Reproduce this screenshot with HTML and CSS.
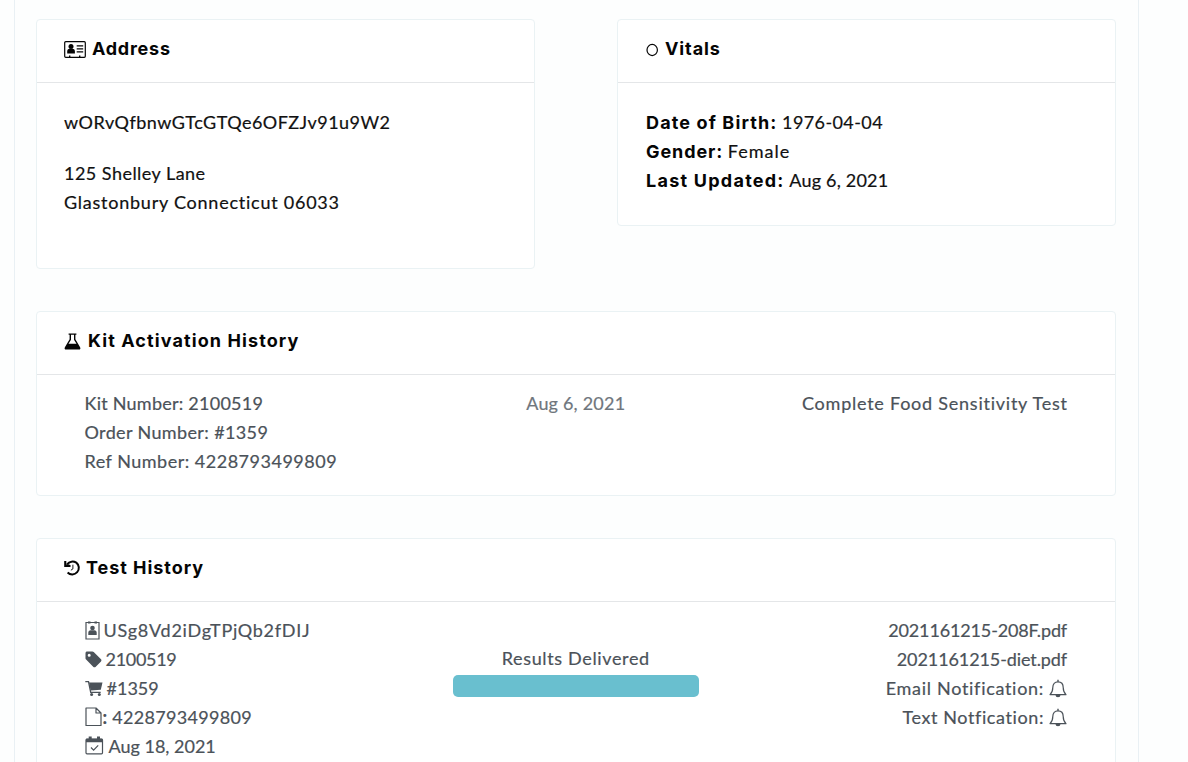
FILE: index.html
```
<!DOCTYPE html>
<html lang="en">
<head>
<meta charset="utf-8">
<title>Customer record</title>
<link rel="stylesheet" href="styles.css">
</head>
<body>
<main class="panel">
  <div class="top-row">
    <section class="card address-card">
      <h2 class="card-header t-address"><svg class="i-address" width="22" height="17" viewBox="0 0 22 17"><rect x=".7" y=".7" width="20.6" height="15.6" rx="1" fill="none" stroke="currentColor" stroke-width="1.2"/><circle cx="7" cy="5.4" r="2.5"/><path d="M3.2 12.4v-2.2c0-1.7 1.300-2.500 2.500-2.500h2.700c1.300 0 2.500.8 2.500 2.500v2.200zM5 14.500h1.400v1.500H5zM15 14.500h1.400v1.500H15z"/><path d="M12.700 4.800h6.500M12.700 7.800h6.500M12.700 10.800h6.500" fill="none" stroke="currentColor" stroke-width="1.2"/></svg><span>Address</span></h2>
      <div class="card-body">
        <p class="t-uid"><span>wORvQfbnwGTcGTQe6OFZJv91u9W2</span></p>
        <p class="address"><span class="t-street">125 Shelley Lane</span><br><span class="t-city">Glastonbury Connecticut 06033</span></p>
      </div>
    </section>
    <section class="card vitals-card">
      <h2 class="card-header t-vitals"><svg class="i-circle" width="13" height="14" viewBox="0 0 13 14"><ellipse cx="6.2" cy="7" rx="5.2" ry="5.6" fill="none" stroke="currentColor" stroke-width="1.2"/></svg><span>Vitals</span></h2>
      <div class="card-body">
        <p><b class="t-dob">Date of Birth:</b> <span class="t-dobv">1976-04-04</span></p>
        <p><b class="t-gender">Gender:</b> <span class="t-genderv">Female</span></p>
        <p><b class="t-upd">Last Updated:</b> <span class="t-date">Aug 6, 2021</span></p>
      </div>
    </section>
  </div>

  <section class="card kit-card">
    <h2 class="card-header t-kit"><svg class="i-flask" width="17" height="17" viewBox="0 0 17 17"><path d="M4.600.4h7.800v1.300h-1v4.600l4.700 7.900c.7 1.200.1 2.400-1.200 2.400H2.100c-1.300 0-1.900-1.200-1.200-2.400l4.700-7.900V1.700h-1zM7 1.700v5L4.500 10.800h8L10 6.700v-5z" fill-rule="evenodd"/></svg><span>Kit Activation History</span></h2>
    <div class="record">
      <div class="details">
        <p><span class="t-kn">Kit Number: 2100519</span></p>
        <p><span class="t-on">Order Number: #1359</span></p>
        <p><span class="t-rn">Ref Number: 4228793499809</span></p>
      </div>
      <p class="date"><span class="t-date">Aug 6, 2021</span></p>
      <p class="result"><span class="t-test">Complete Food Sensitivity Test</span></p>
    </div>
  </section>

  <section class="card test-card">
    <h2 class="card-header t-hist"><svg class="i-history" width="17" height="17" viewBox="0 0 17 17"><path d="M.2 1v6h6.300V5H2.300V1z"/><path d="M1 5.600h4.500" fill="none" stroke="currentColor" stroke-width="2.400"/><path d="M3 4.300C5.500 1.300 9.500.9 12.300 2.600a6.600 6.600 0 1 1-8.700 9.900" fill="none" stroke="currentColor" stroke-width="2"/><path d="M8.900 4.700v4.200l-2 1.300" fill="none" stroke="currentColor" stroke-width=".9"/></svg><span>Test History</span></h2>
    <div class="record">
      <div class="details">
        <p class="icon-line l-id"><svg width="15" height="19" viewBox="0 0 15 19"><path d="M1 1.500h13v16.500H1z" fill="none" stroke="currentColor" stroke-width="1.200"/><path d="M3 .5h2.500v2H3zM9.500.5H12v2H9.500z"/><circle cx="7.500" cy="7" r="2.300"/><path d="M3.300 14v-2.300c0-1.600 1-2.500 2.300-2.500h3.800c1.300 0 2.300.9 2.300 2.500V14z"/></svg><span class="t-id">USg8Vd2iDgTPjQb2fDIJ</span></p>
        <p class="icon-line l-tag"><svg width="17" height="17" viewBox="0 0 17 17"><path d="M.5 2.200C.5 1.200 1.200.500 2.200.500h5.200c.5 0 .9.200 1.300.500l7.300 7.300c.6.600.6 1.500 0 2.100l-5.500 5.500c-.6.600-1.500.6-2.100 0L1.100 8.600C.7 8.200.5 7.800.5 7.300zM4.200 2.700a1.500 1.500 0 1 0 0 3 1.500 1.500 0 0 0 0-3z" fill-rule="evenodd"/></svg><span class="t-tag">2100519</span></p>
        <p class="icon-line l-cart"><svg width="18" height="17" viewBox="0 0 18 17"><path d="M4 2.400h13.500l-1.700 7.400-10.200.700z"/><path d="M.300 1.700h3.200l2.200 10.600h10" fill="none" stroke="currentColor" stroke-width="1.300"/><circle cx="6.600" cy="14.400" r="1.500"/><circle cx="14.300" cy="14.400" r="1.500"/></svg><span class="t-cart">#1359</span></p>
        <p class="icon-line l-file"><svg width="17" height="20" viewBox="0 0 17 20"><path d="M1 1h10l5 5v12.500H1zM11 1v5h5" fill="none" stroke="currentColor" stroke-width="1.200" stroke-linejoin="round"/></svg><span class="t-file"><b>:</b> 4228793499809</span></p>
        <p class="icon-line l-cal"><svg width="19" height="19" viewBox="0 0 19 19"><rect x="1" y="3" width="16.500" height="14.800" rx="1" fill="none" stroke="currentColor" stroke-width="1.200"/><path d="M1 2.700h16.500v3.500H1zM3.700.600h3v4h-3zM12 .600h3v4h-3z"/><path d="M6 11.500l2.600 2.600 4.600-4.800" fill="none" stroke="currentColor" stroke-width="1.200"/></svg><span class="t-cal">Aug 18, 2021</span></p>
      </div>
      <div class="status">
        <p><span class="t-res">Results Delivered</span></p>
        <div class="bar"></div>
      </div>
      <div class="result">
        <p><span class="t-pdf1">2021161215-208F.pdf</span></p>
        <p><span class="t-pdf2">2021161215-diet.pdf</span></p>
        <p class="notify"><span class="t-email">Email Notification:</span><svg width="18" height="19" viewBox="0 0 18 19"><path d="M1 15.600c2.500-2.200 2.800-4 2.800-7 0-3.500 2-5.800 5.200-5.800s5.200 2.300 5.200 5.800c0 3 .3 4.800 2.800 7z" fill="none" stroke="currentColor" stroke-width="1.200" stroke-linejoin="round"/><path d="M8.300.700h1.400v2H8.300zM6.500 16h5a2.500 2.300 0 0 1-5 0z"/></svg></p>
        <p class="notify"><span class="t-text">Text Notfication:</span><svg width="18" height="19" viewBox="0 0 18 19"><path d="M1 15.600c2.500-2.200 2.800-4 2.800-7 0-3.500 2-5.800 5.200-5.800s5.200 2.300 5.200 5.800c0 3 .3 4.800 2.800 7z" fill="none" stroke="currentColor" stroke-width="1.200" stroke-linejoin="round"/><path d="M8.300.700h1.400v2H8.300zM6.500 16h5a2.500 2.300 0 0 1-5 0z"/></svg></p>
      </div>
    </div>
  </section>
</main>
</body>
</html>
```
FILE: styles.css
```
* { box-sizing: border-box; }
body {
  margin: 0;
  height: 762px;
  overflow: hidden;
  background: #fdfefe;
  color: #111;
  font: 18px/28.8px Lato, "Open Sans", sans-serif;
  font-variant-ligatures: none;
  -webkit-text-stroke: .2px currentColor;
}
p, h2 { margin: 0; font-size: 18px; }
svg { display: block; flex: none; fill: currentColor; }
.panel {
  width: 1125px;
  min-height: 762px;
  margin-left: 14px;
  padding: 19px 22px 0 21px;
  border: solid #e9f0f4;
  border-width: 0 1px;
}
.top-row {
  display: flex;
  justify-content: space-between;
  align-items: flex-start;
  height: 292px;
}
.card {
  background: #fff;
  border: 1px solid #eaf2f4;
  border-radius: 4px;
}
.top-row .card { width: 499px; }
.address-card { height: 250px; }
.vitals-card { height: 207px; }
.kit-card { height: 185px; margin-bottom: 42px; }
.test-card { height: 260px; }
.card-header {
  display: flex;
  align-items: center;
  height: 63px;
  padding: 0 27px 3px;
  border-bottom: 1px solid #e4e6e8;
  color: #050505;
  font-family: Inter, sans-serif;
  font-weight: 700;
  -webkit-text-stroke: 0;
  white-space: nowrap;
}
.card-body { padding: 25px 27px; white-space: nowrap; }
.vitals-card .card-body { padding-left: 28px; }
.vitals-card .card-header { padding-left: 28px; }
.card-body b {
  color: #050505;
  font-family: Inter, sans-serif;
  font-weight: 700;
  line-height: 1;
  -webkit-text-stroke: 0;
}
.address { margin-top: 22.200px; }
.i-address { margin-right: 6px; }
.i-circle { margin-right: 6px; }
.i-flask { margin-right: 7px; }
.i-history { margin-right: 5px; }
.record {
  display: grid;
  grid-template-columns: 1fr 25% 1fr;
  padding: 14.400px 48px 0 47.500px;
  color: #4b5259;
  white-space: nowrap;
}
.date { color: #6f767d; text-align: center; }
.result { text-align: right; }
.status { padding-top: 27.400px; text-align: center; }
.bar { height: 22px; margin-top: 2px; border-radius: 5px; background: #69bfcf; }
.icon-line { display: flex; align-items: center; height: 28.8px; }
.l-id svg { margin-right: 4px; }
.l-tag svg { margin-right: 4px; }
.l-cart svg { margin-right: 4px; }
.l-file svg { margin-right: 1px; }
.l-cal svg { margin-right: 5px; }
.notify { display: flex; justify-content: flex-end; align-items: center; height: 28.8px; }
.notify svg { margin-left: 4px; }

/* per-label tracking */
.t-address { letter-spacing: .75px; }
.t-vitals { letter-spacing: .9px; }
.t-kit { letter-spacing: 1.1px; }
.t-hist { letter-spacing: .95px; }
.t-dob { letter-spacing: 1.13px; }
.t-gender { letter-spacing: .9px; }
.t-upd { letter-spacing: 1.25px; }
.t-uid { letter-spacing: .46px; }
.t-street { letter-spacing: .47px; }
.t-city { letter-spacing: .76px; }
.t-dobv { letter-spacing: .4px; }
.t-genderv { letter-spacing: 1px; }
.t-date { letter-spacing: .2px; }
.t-kn { letter-spacing: .24px; }
.t-on { letter-spacing: .37px; }
.t-rn { letter-spacing: .5px; }
.t-test { letter-spacing: .76px; margin-right: -.76px; }
.t-id { letter-spacing: .74px; }
.t-tag { letter-spacing: -.3px; }
.t-file { letter-spacing: .3px; }
.t-res { letter-spacing: .65px; }
.t-pdf1 { letter-spacing: -.15px; }
.t-pdf2 { letter-spacing: -.1px; }
.t-email { letter-spacing: .7px; }
.t-text { letter-spacing: .6px; }
.notify span { margin-right: 1px; }
```
